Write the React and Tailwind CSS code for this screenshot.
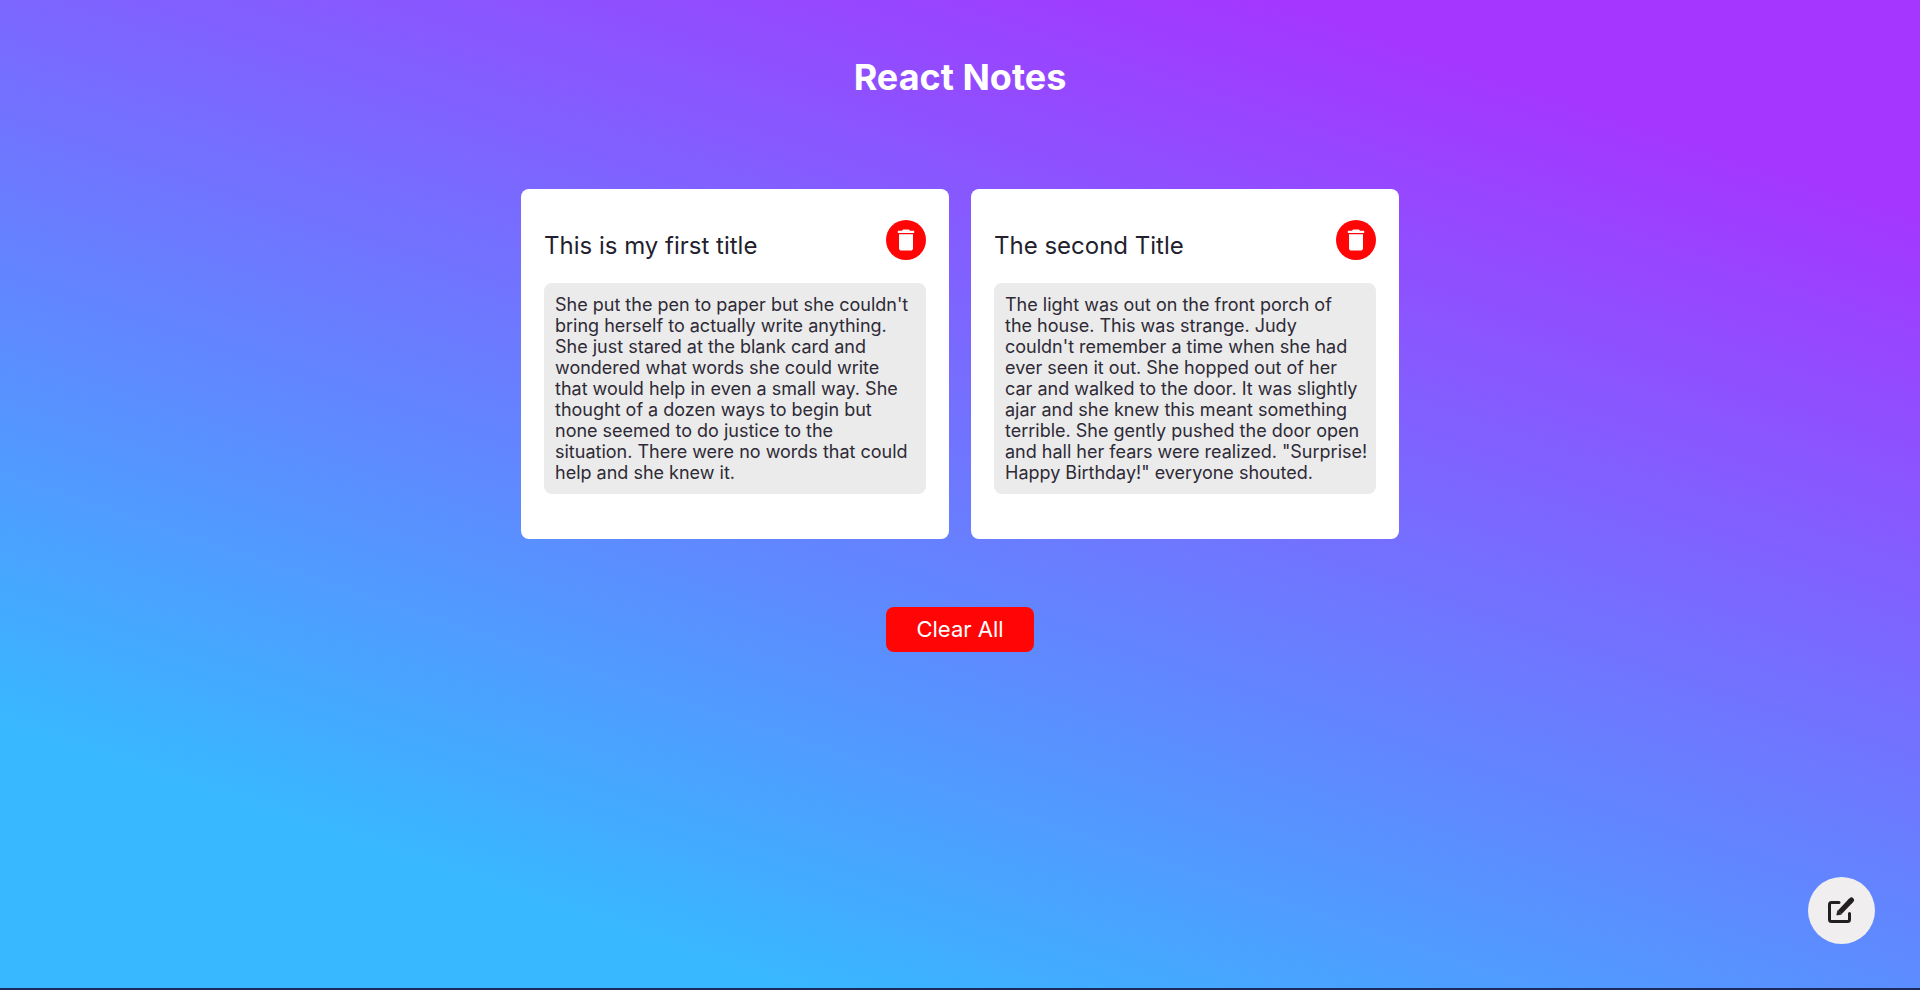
import { MdDelete } from "react-icons/md";

const notes = [
  {
    title: "This is my first title",
    body: "She put the pen to paper but she couldn't bring herself to actually write anything. She just stared at the blank card and wondered what words she could write\nthat would help in even a small way. She thought of a dozen ways to begin but none seemed to do justice to the\nsituation. There were no words that could help and she knew it.",
  },
  {
    title: "The second Title",
    body: "The light was out on the front porch of\nthe house. This was strange. Judy couldn't remember a time when she had ever seen it out. She hopped out of her car and walked to the door. It was slightly ajar and she knew this meant something terrible. She gently pushed the door open and hall her fears were realized. \"Surprise! Happy Birthday!\" everyone shouted.",
  },
];

function EditIcon() {
  return (
    <svg viewBox="0 0 27 27" className="size-[27px]" fill="none" stroke="currentColor" strokeLinejoin="round" aria-hidden="true">
      <path d="M11 5.500H3.500a2 2 0 0 0-2 2V22.500a2 2 0 0 0 2 2H19.500a2 2 0 0 0 2-2V16.500" strokeWidth="3" strokeLinecap="round" />
      <path d="M11.800 15.200 22.600 3.900" strokeWidth="5.200" />
      <path d="M22.600 3.900 23.400 3.100" strokeWidth="5.200" strokeLinecap="round" />
      <path d="M9.800 13.700 8.800 18 13.300 17.200Z" fill="currentColor" strokeWidth="0.8" />
    </svg>
  );
}

function Note({ title, body }) {
  return (
    <article className="w-full max-w-[428px] rounded-lg bg-white px-[23px] pt-[31px] pb-[45px]">
      <div className="flex items-start justify-between">
        <h2 className="pt-3 text-2xl leading-7 font-normal">{title}</h2>
        <button type="button" aria-label="Delete note" className="flex size-10 shrink-0 items-center justify-center rounded-full bg-[#ff0505] text-white">
          <MdDelete className="size-7" />
        </button>
      </div>
      <p className="mt-[23px] rounded-lg bg-[#ebebeb] py-[11px] pr-2 pl-[11px] text-lg leading-[21px] font-normal whitespace-pre-line text-[#2e2a36]">{body}</p>
    </article>
  );
}

export default function App() {
  return (
    <div className="flex min-h-screen flex-col items-center border-b-2 border-[#1b2a5c] bg-[linear-gradient(18.5deg,#38b8ff_16%,#a436ff_87%)] px-6 font-['Inter',sans-serif] text-[#231f2e]">
      <h1 className="pt-[55px] text-4xl leading-[44px] font-bold text-white">React Notes</h1>
      <main className="mt-[90px] flex w-full flex-col items-center">
        <div className="flex w-full flex-wrap justify-center gap-[22px]">
          {notes.map((note) => (
            <Note key={note.title} {...note} />
          ))}
        </div>
        <button type="button" className="mt-[68px] rounded-lg bg-[#ff0505] px-[30px] py-2 text-[22px] leading-[29px] text-white">
          Clear All
        </button>
      </main>
      <button type="button" aria-label="Write a note" className="fixed right-[45px] bottom-[46px] flex size-[67px] items-center justify-center rounded-full bg-[#f0eeee] text-[#231f20]">
        <EditIcon />
      </button>
    </div>
  );
}
